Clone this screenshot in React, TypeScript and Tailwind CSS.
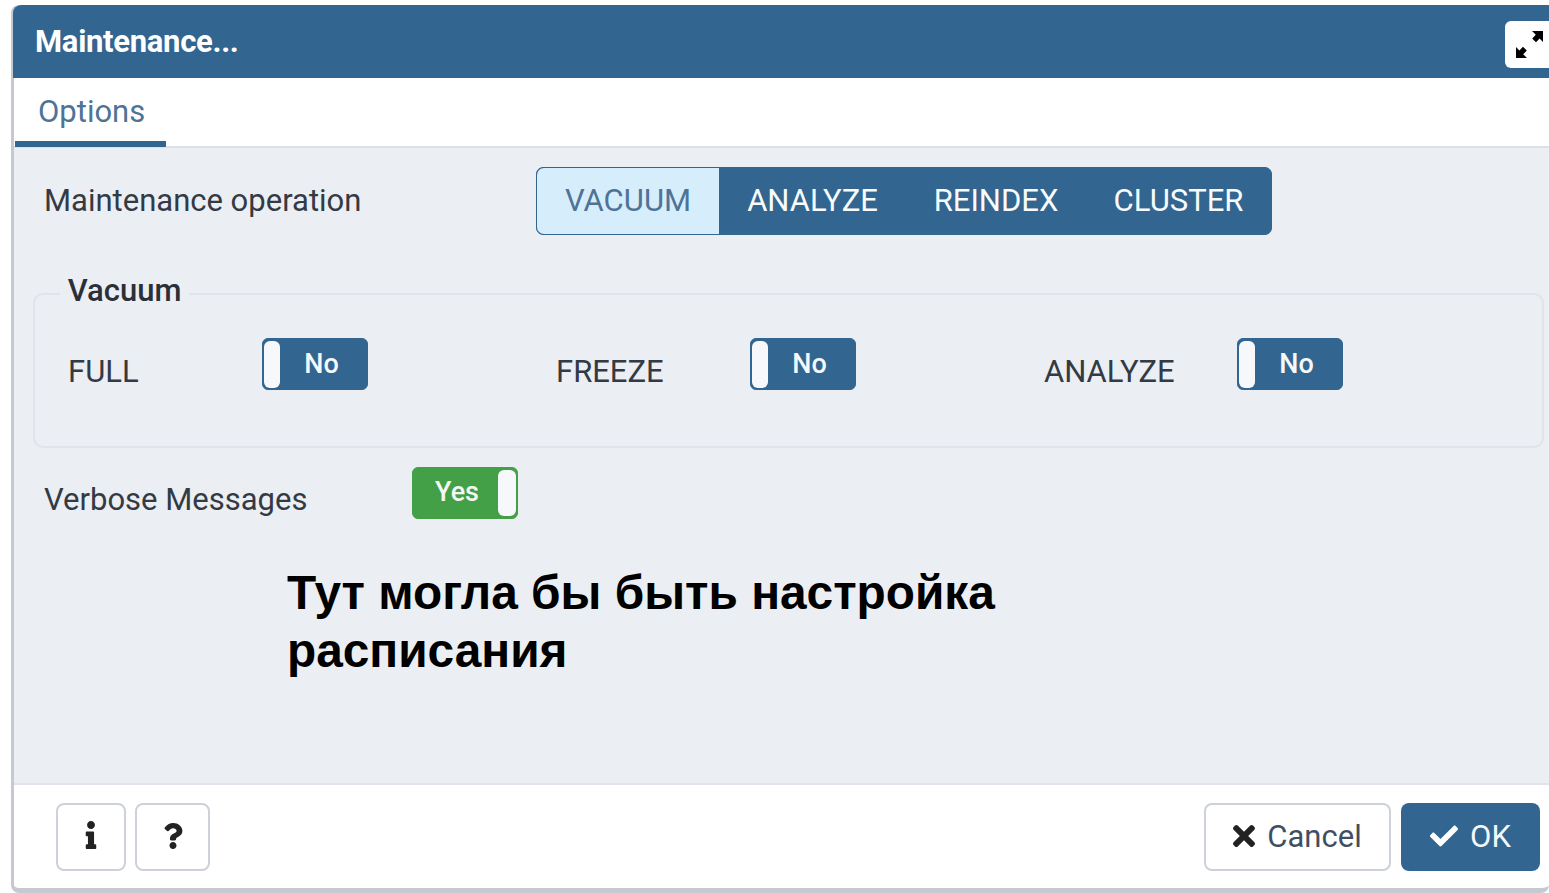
import { FaCheck, FaInfo, FaQuestion, FaTimes } from "react-icons/fa";

const ROBOTO = "font-['Roboto',sans-serif]";

function Switch({ on }: { on?: boolean }) {
  if (on) {
    return (
      <div className="flex h-[52px] w-[106px] items-center rounded-[6px] border border-[#43a047] bg-[#43a047] pr-[1px]">
        <span className="flex-1 pb-[1px] pl-[3px] text-center text-[27px] font-medium text-[#f4f8f4]">Yes</span>
        <span className="h-[46px] w-[18px] rounded-[6px] bg-[#f6f8fb]" />
      </div>
    );
  }
  return (
    <div className="flex h-[52px] w-[106px] items-center rounded-[6px] border border-[#326690] bg-[#326690] pl-[1px]">
      <span className="h-[47px] w-[16px] rounded-[6px] bg-[#f6f8fb]" />
      <span className="flex-1 pr-[4px] text-center text-[27px] font-medium text-[#f4f8fb]">No</span>
    </div>
  );
}

function VacuumOption({ label, labelWidth }: { label: string; labelWidth: string }) {
  return (
    <div className="flex items-start">
      <span className={`${labelWidth} pt-[15px] text-[31px] leading-[38px] text-[#333a44]`}>{label}</span>
      <Switch />
    </div>
  );
}

function ExpandIcon() {
  return (
    <svg viewBox="0 0 27 27" className="h-[27px] w-[27px]" fill="currentColor">
      <path d="M16 0h11v11l-3.400-3.400-3.600 3.600-3.800-3.800 3.600-3.600z" />
      <path d="M0 27V16l3.400 3.400 3.600-3.600 3.800 3.800-3.600 3.600L11 27z" />
    </svg>
  );
}

export default function App() {
  return (
    <div className={`h-[893px] w-[1549px] overflow-hidden bg-white pl-[11px] pt-[5px] ${ROBOTO}`}>
      <div className="flex h-[888px] w-[1538px] flex-col rounded-[8px] border-b-[5px] border-l-[3px] border-[#c5c9d2] bg-white">
        <header className="-ml-[1px] flex h-[73px] shrink-0 items-center justify-between rounded-tl-[8px] bg-[#326690] pl-[22px]">
          <h1 className="pt-[2px] text-[31px] font-bold tracking-[-0.3px] text-white">Maintenance...</h1>
          <button className="mt-[6px] flex h-[47px] w-[44px] items-center rounded-l-[6px] bg-white pl-[11px] text-black">
            <ExpandIcon />
          </button>
        </header>

        <nav className="flex h-[70px] shrink-0 border-b-[2px] border-[#dde0e6]">
          <div className="ml-[1px] flex h-[69px] w-[151px] items-start border-b-[6px] border-[#326690] pl-[23px] pt-[15px] text-[31px] leading-[38px] text-[#4f7397]">
            Options
          </div>
        </nav>

        <main className="flex min-h-0 flex-1 flex-col bg-[#ebeef3] pl-[20px]">
          <div className="flex items-center pl-[10px] pt-[19px]">
            <span className="w-[492px] text-[31px] leading-[38px] text-[#333a44]">Maintenance operation</span>
            <div className="flex h-[68px] items-center rounded-[7px] border border-[#326690] bg-[#326690] text-[31px] text-[#f8fafc]">
              <span className="flex h-full w-[182px] items-center justify-center rounded-l-[7px] bg-[#d6eefc] text-[#4f7397]">VACUUM</span>
              <span className="w-[187px] text-center">ANALYZE</span>
              <span className="w-[180px] text-center">REINDEX</span>
              <span className="w-[185px] text-center">CLUSTER</span>
            </div>
          </div>

          <fieldset className="-ml-[1px] mt-[38px] h-[175px] w-[1511px] rounded-[10px] border-2 border-[#e0e3e9] px-[33px]">
            <legend className="-ml-[8px] pb-[6px] text-[31px] font-medium leading-[36px] text-[#2b2f38]">&nbsp;Vacuum&nbsp;</legend>
            <div className="grid grid-cols-[488px_488px_1fr] pt-[23px]">
              <VacuumOption label="FULL" labelWidth="w-[194px]" />
              <VacuumOption label="FREEZE" labelWidth="w-[194px]" />
              <VacuumOption label="ANALYZE" labelWidth="w-[193px]" />
            </div>
          </fieldset>

          <div className="mt-[19px] flex items-start pl-[10px]">
            <span className="w-[368px] pt-[14px] text-[31px] leading-[38px] text-[#333a44]">Verbose Messages</span>
            <Switch on />
          </div>

          <p className="ml-[253px] mt-[45px] w-[760px] font-['Liberation_Sans',sans-serif] text-[47.800px] font-bold leading-[58px] text-black">
            Тут могла бы быть настройка расписания
          </p>
        </main>

        <footer className="flex h-[105px] shrink-0 items-start justify-between border-t-[2px] border-[#e0e3e9] pl-[42px] pr-[9px] pt-[18px]">
          <div className="flex gap-[9px]">
            <button className="flex h-[68px] w-[70px] items-center justify-center rounded-[8px] border-2 border-[#ccd1da] bg-white pb-[4px] text-[#222]">
              <FaInfo className="h-[28px] w-[28px]" />
            </button>
            <button className="flex h-[68px] w-[75px] items-center justify-center rounded-[8px] border-2 border-[#ccd1da] bg-white pb-[2px] text-[#222]">
              <FaQuestion className="h-[26px] w-[26px]" />
            </button>
          </div>
          <div className="flex gap-[10px]">
            <button className="flex h-[68px] w-[187px] items-center justify-center gap-[12px] rounded-[8px] border-2 border-[#ccd1da] bg-white text-[31px] text-[#3f4f63]">
              <FaTimes className="mb-[3px] h-[32px] w-[22px] text-[#222]" />
              Cancel
            </button>
            <button className="flex h-[68px] w-[139px] items-center justify-center gap-[12px] rounded-[8px] bg-[#326690] text-[31px] text-[#f4f8fb]">
              <FaCheck className="mb-[3px] h-[28px] w-[28px] text-white" />
              OK
            </button>
          </div>
        </footer>
      </div>
    </div>
  );
}
